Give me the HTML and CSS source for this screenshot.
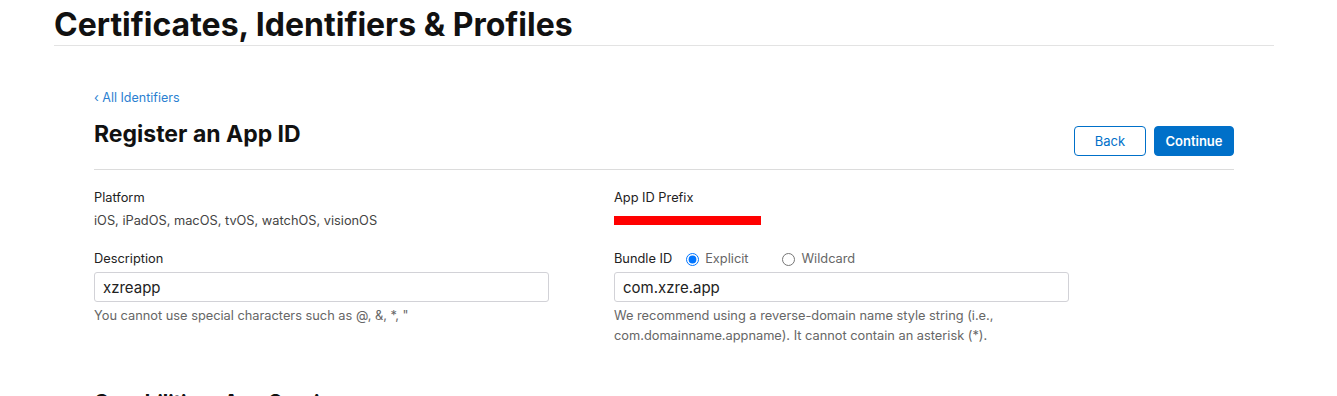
FILE: index.html
```html
<!DOCTYPE html>
<html lang="en">
<head>
    <meta charset="UTF-8">
    <title>Register an App ID</title>
    <link rel="stylesheet" href="styles.css">
</head>
<body>
    <header class="page-header">
        <h1>Certificates, Identifiers &amp; Profiles</h1>
    </header>

    <main class="content">
        <a class="back-link" href="#">&lsaquo; All Identifiers</a>

        <div class="title-row">
            <h2>Register an App ID</h2>
            <div class="actions">
                <button class="btn btn-secondary">Back</button>
                <button class="btn btn-primary">Continue</button>
            </div>
        </div>

        <div class="form-grid">
            <div class="field">
                <div class="label">Platform</div>
                <div class="value">iOS, iPadOS, macOS, tvOS, watchOS, visionOS</div>
            </div>
            <div class="field">
                <div class="label">App ID Prefix</div>
                <div class="value"><span class="redacted"></span></div>
            </div>

            <div class="field">
                <label class="label" for="description">Description</label>
                <input id="description" class="text-input" type="text" value="xzreapp">
                <p class="help">You cannot use special characters such as @, &amp;, *, "</p>
            </div>
            <div class="field">
                <div class="label bundle-row">
                    <span>Bundle ID</span>
                    <label class="radio"><input type="radio" name="bundle" checked> Explicit</label>
                    <label class="radio wide"><input type="radio" name="bundle"> Wildcard</label>
                </div>
                <input class="text-input" type="text" value="com.xzre.app">
                <p class="help">We recommend using a reverse-domain name style string (i.e., com.domainname.appname). It cannot contain an asterisk (*).</p>
            </div>
        </div>

        <h3 class="section-title">Capabilities &nbsp; App Services</h3>
    </main>
</body>
</html>
```

FILE: styles.css
```css
body {
    margin: 0;
    font-family: Inter, "Noto Sans", Arial, sans-serif;
    color: #1d1d1f;
    background: #fff;
}
.page-header {
    margin: 0 63px 0 54px;
    border-bottom: 1px solid #e3e3e3;
}
.page-header h1 {
    margin: 0;
    padding-top: 4px;
    font-size: 32px;
    font-weight: 700;
    line-height: 41px;
    color: #111;
}
.content {
    margin: 0 103px 0 94px;
    padding-top: 43px;
}
.back-link {
    display: block;
    font-size: 12.5px;
    line-height: 18px;
    color: #2c7fd1;
    text-decoration: none;
}
.title-row {
    display: flex;
    justify-content: space-between;
    align-items: flex-start;
    margin-top: 7px;
    padding-bottom: 13px;
    border-bottom: 1px solid #dcdcdc;
}
.title-row h2 {
    margin: 0;
    padding-top: 6px;
    font-size: 23px;
    font-weight: 700;
    line-height: 28px;
    color: #111;
}
.actions {
    display: flex;
    gap: 8px;
    padding-top: 12px;
}
.btn {
    height: 30px;
    font-family: inherit;
    font-size: 13px;
    border-radius: 4px;
    cursor: pointer;
}
.btn-secondary {
    width: 72px;
    background: #fff;
    border: 1px solid #0070c9;
    color: #0070c9;
}
.btn-primary {
    width: 80px;
    background: #0070c9;
    border: 1px solid #0070c9;
    color: #fff;
    font-weight: 600;
}
.form-grid {
    display: grid;
    grid-template-columns: 520px 455px;
    row-gap: 18px;
    padding-top: 18px;
}
.field {
    display: flex;
    flex-direction: column;
}
.label {
    font-size: 12.8px;
    line-height: 20px;
    color: #222;
    font-weight: 400;
}
.value {
    margin-top: 3px;
    font-size: 12.8px;
    line-height: 20px;
    color: #444;
}
.redacted {
    display: inline-block;
    width: 147px;
    height: 9px;
    margin-top: 5px;
    background: #ff0000;
}
.text-input {
    box-sizing: border-box;
    width: 455px;
    height: 30px;
    margin-top: 3px;
    padding: 0 8px;
    font-family: inherit;
    font-size: 15px;
    color: #222;
    border: 1px solid #d2d2d7;
    border-radius: 3px;
}
.help {
    margin: 4px 0 0;
    font-size: 12.8px;
    line-height: 20px;
    color: #666;
}
.bundle-row {
    display: flex;
    align-items: center;
    gap: 14px;
}
.radio {
    display: flex;
    align-items: center;
    gap: 6px;
    color: #666;
}
.radio input {
    margin: 0;
    width: 13px;
    height: 13px;
}
.radio.wide {
    margin-left: 20px;
}
.section-title {
    margin: 44px 0 0;
    font-size: 20px;
    font-weight: 700;
    color: #111;
}
```
